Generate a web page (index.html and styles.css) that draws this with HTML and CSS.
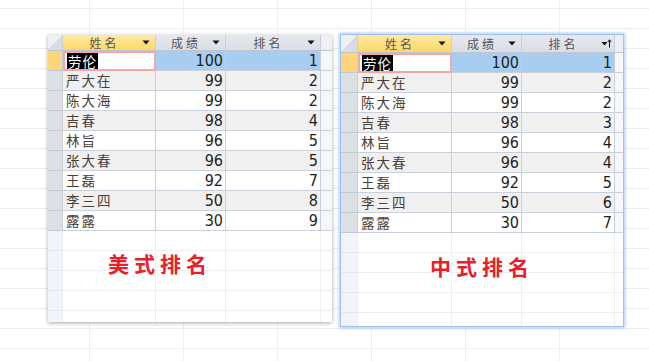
FILE: index.html
```html
<!DOCTYPE html>
<html lang="zh-CN">
<head>
<meta charset="utf-8">
<title>美式排名 与 中式排名</title>
<link rel="stylesheet" href="styles.css">
</head>
<body>
<div class="sheet us">
  <div class="row head">
    <div class="cell corner"></div>
    <div class="cell hcell sel"><span class="htext">姓名</span><svg class="dd" width="8" height="5" viewBox="0 0 8 5"><path d="M0.5 0.5H7.5L4 4.5Z" fill="#111"/></svg></div>
    <div class="cell hcell"><span class="htext">成绩</span><svg class="dd" width="8" height="5" viewBox="0 0 8 5"><path d="M0.5 0.5H7.5L4 4.5Z" fill="#111"/></svg></div>
    <div class="cell hcell"><span class="htext">排名</span><svg class="dd" width="8" height="5" viewBox="0 0 8 5"><path d="M0.5 0.5H7.5L4 4.5Z" fill="#111"/></svg></div>
    <div class="cell fill"></div>
  </div>
  <div class="row cur"><div class="cell rh"></div><div class="cell name edit"><span class="hl">劳伦</span></div><div class="cell num">100</div><div class="cell num">1</div><div class="cell fill"></div></div>
  <div class="row alt"><div class="cell rh"></div><div class="cell name">严大在</div><div class="cell num">99</div><div class="cell num">2</div><div class="cell fill"></div></div>
  <div class="row"><div class="cell rh"></div><div class="cell name">陈大海</div><div class="cell num">99</div><div class="cell num">2</div><div class="cell fill"></div></div>
  <div class="row alt"><div class="cell rh"></div><div class="cell name">吉春</div><div class="cell num">98</div><div class="cell num">4</div><div class="cell fill"></div></div>
  <div class="row"><div class="cell rh"></div><div class="cell name">林旨</div><div class="cell num">96</div><div class="cell num">5</div><div class="cell fill"></div></div>
  <div class="row alt"><div class="cell rh"></div><div class="cell name">张大春</div><div class="cell num">96</div><div class="cell num">5</div><div class="cell fill"></div></div>
  <div class="row"><div class="cell rh"></div><div class="cell name">王磊</div><div class="cell num">92</div><div class="cell num">7</div><div class="cell fill"></div></div>
  <div class="row alt"><div class="cell rh"></div><div class="cell name">李三四</div><div class="cell num">50</div><div class="cell num">8</div><div class="cell fill"></div></div>
  <div class="row"><div class="cell rh"></div><div class="cell name">露露</div><div class="cell num">30</div><div class="cell num">9</div><div class="cell fill"></div></div>
  <div class="row empty"><div class="cell rh"></div><div class="cell"></div><div class="cell"></div><div class="cell"></div><div class="cell fill"></div></div>
  <div class="row empty"><div class="cell rh"></div><div class="cell"></div><div class="cell"></div><div class="cell"></div><div class="cell fill"></div></div>
  <div class="row empty"><div class="cell rh"></div><div class="cell"></div><div class="cell"></div><div class="cell"></div><div class="cell fill"></div></div>
  <div class="row empty"><div class="cell rh"></div><div class="cell"></div><div class="cell"></div><div class="cell"></div><div class="cell fill"></div></div>
  <div class="row empty"><div class="cell rh"></div><div class="cell"></div><div class="cell"></div><div class="cell"></div><div class="cell fill"></div></div>
  <div class="label">美式排名</div>
</div>

<div class="sheet cn">
  <div class="row head">
    <div class="cell corner"></div>
    <div class="cell hcell sel"><span class="htext">姓名</span><svg class="dd" width="8" height="5" viewBox="0 0 8 5"><path d="M0.5 0.5H7.5L4 4.5Z" fill="#111"/></svg></div>
    <div class="cell hcell"><span class="htext">成绩</span><svg class="dd" width="8" height="5" viewBox="0 0 8 5"><path d="M0.5 0.5H7.5L4 4.5Z" fill="#111"/></svg></div>
    <div class="cell hcell"><span class="htext">排名</span><svg class="dd sort" width="11" height="9" viewBox="0 0 11 9"><path d="M0.5 3H6.5L3.5 6.5Z" fill="#111"/><path d="M8.5 8.5V1.2" stroke="#111" stroke-width="1"/><path d="M6.8 3L8.5 0.8L10.2 3" fill="none" stroke="#111" stroke-width="1"/></svg></div>
    <div class="cell fill"></div>
  </div>
  <div class="row cur"><div class="cell rh"></div><div class="cell name edit"><span class="hl">劳伦</span></div><div class="cell num">100</div><div class="cell num">1</div><div class="cell fill"></div></div>
  <div class="row alt"><div class="cell rh"></div><div class="cell name">严大在</div><div class="cell num">99</div><div class="cell num">2</div><div class="cell fill"></div></div>
  <div class="row"><div class="cell rh"></div><div class="cell name">陈大海</div><div class="cell num">99</div><div class="cell num">2</div><div class="cell fill"></div></div>
  <div class="row alt"><div class="cell rh"></div><div class="cell name">吉春</div><div class="cell num">98</div><div class="cell num">3</div><div class="cell fill"></div></div>
  <div class="row"><div class="cell rh"></div><div class="cell name">林旨</div><div class="cell num">96</div><div class="cell num">4</div><div class="cell fill"></div></div>
  <div class="row alt"><div class="cell rh"></div><div class="cell name">张大春</div><div class="cell num">96</div><div class="cell num">4</div><div class="cell fill"></div></div>
  <div class="row"><div class="cell rh"></div><div class="cell name">王磊</div><div class="cell num">92</div><div class="cell num">5</div><div class="cell fill"></div></div>
  <div class="row alt"><div class="cell rh"></div><div class="cell name">李三四</div><div class="cell num">50</div><div class="cell num">6</div><div class="cell fill"></div></div>
  <div class="row"><div class="cell rh"></div><div class="cell name">露露</div><div class="cell num">30</div><div class="cell num">7</div><div class="cell fill"></div></div>
  <div class="row empty"><div class="cell rh"></div><div class="cell"></div><div class="cell"></div><div class="cell"></div><div class="cell fill"></div></div>
  <div class="row empty"><div class="cell rh"></div><div class="cell"></div><div class="cell"></div><div class="cell"></div><div class="cell fill"></div></div>
  <div class="row empty"><div class="cell rh"></div><div class="cell"></div><div class="cell"></div><div class="cell"></div><div class="cell fill"></div></div>
  <div class="row empty"><div class="cell rh"></div><div class="cell"></div><div class="cell"></div><div class="cell"></div><div class="cell fill"></div></div>
  <div class="row empty"><div class="cell rh"></div><div class="cell"></div><div class="cell"></div><div class="cell"></div><div class="cell fill"></div></div>
  <div class="label">中式排名</div>
</div>
</body>
</html>
```

FILE: styles.css
```css
html, body {
  margin: 0;
  padding: 0;
}
body {
  width: 649px;
  height: 361px;
  overflow: hidden;
  box-sizing: border-box;
  padding: 34px 0 0 48px;
  display: flex;
  align-items: flex-start;
  gap: 8px;
  background-color: #fff;
  background-image:
    linear-gradient(to bottom, #eceef2 1px, transparent 1px),
    linear-gradient(to right, #eceef2 1px, transparent 1px);
  background-size: 100% 20px, 94px 100%;
  background-position: 0 8px, 89px 0;
  font-family: "Noto Sans CJK SC", "Noto Sans", sans-serif;
}

.sheet {
  position: relative;
  overflow: hidden;
  background: #fff;
  box-sizing: border-box;
  --cols: 15px 93px 70px 95px 11px;
  --headh: 16px;
}
.sheet.us {
  margin-top: 1px;
  height: 287px;
  box-shadow: 0 1px 4px rgba(0, 0, 0, 0.35);
}
.sheet.cn {
  height: 293px;
  border: 1px solid #9dc3f5;
  box-shadow: 0 0 3px 1px rgba(110, 165, 240, 0.6);
  --cols: 17px 94px 70px 93px 8px;
  --headh: 18px;
}

.row {
  display: grid;
  grid-template-columns: var(--cols);
  height: 20px;
}
.row.head {
  height: var(--headh);
}

.cell {
  box-sizing: border-box;
  border-right: 1px solid #c9d0dc;
  border-bottom: 1px solid #c9d0dc;
  min-width: 0;
  overflow: hidden;
  white-space: nowrap;
}
.cell.fill {
  border-right: none;
  background: #f6f7fb;
}

.head .cell {
  background: linear-gradient(#e6e9ee, #dadee5);
  border-bottom-color: #bfc6d2;
  overflow: visible;
}
.head .cell.fill {
  background: #eef0f5;
}
.head .corner {
  background: linear-gradient(to top left, #d9dde3 50%, #eef0f3 50%);
}
.head .hcell.sel {
  background: linear-gradient(#ffe9a3, #fdd866);
}
.hcell {
  display: flex;
  align-items: center;
  padding-right: 5px;
}
.htext {
  flex: 1;
  text-align: center;
  font-size: 12px;
  letter-spacing: 3px;
  color: #555;
  line-height: 14px;
  padding-left: 4px;
}
.dd {
  flex: none;
}
.dd.sort {
  margin-right: -3px;
}

.rh {
  background: #dcdfe4;
  border-bottom-color: #c3c8d1;
}
.cur .rh {
  background: #fcd67a;
}

.alt .cell {
  background-color: #f0f0f0;
}
.alt .cell.rh {
  background-color: #dcdfe4;
}
.alt .cell.fill {
  background: #f6f7fb;
}

.name {
  font-size: 13.5px;
  letter-spacing: 2px;
  color: #4a4038;
  padding-left: 3px;
  line-height: 19px;
}
.name.edit {
  border: 2px solid #f4a6ab;
  padding-left: 2px;
  line-height: 16px;
  background: #fff;
}
.hl {
  background: #000;
  color: #fff;
  letter-spacing: 1px;
  padding: 0 1px;
}

.num {
  font-family: "Liberation Sans Narrow", "DejaVu Sans Condensed", "Liberation Sans", sans-serif;
  font-size: 16px;
  color: #1e1e1e;
  text-align: right;
  padding-right: 2px;
  line-height: 19px;
}
.cur .num {
  background: #a7cdf0;
}

.empty .cell {
  border-bottom-color: #eceef3;
  border-right-color: #eceef3;
}
.empty .rh {
  background: #f3f4fb;
  border-bottom-color: #e6e8f0;
}
.empty .fill {
  background: #fff;
}

.label {
  position: absolute;
  font-size: 21px;
  font-weight: 700;
  letter-spacing: 5px;
  color: #e8202a;
  line-height: 1;
}
.us .label {
  left: 60px;
  top: 218px;
}
.cn .label {
  left: 89px;
  top: 221px;
}
```
